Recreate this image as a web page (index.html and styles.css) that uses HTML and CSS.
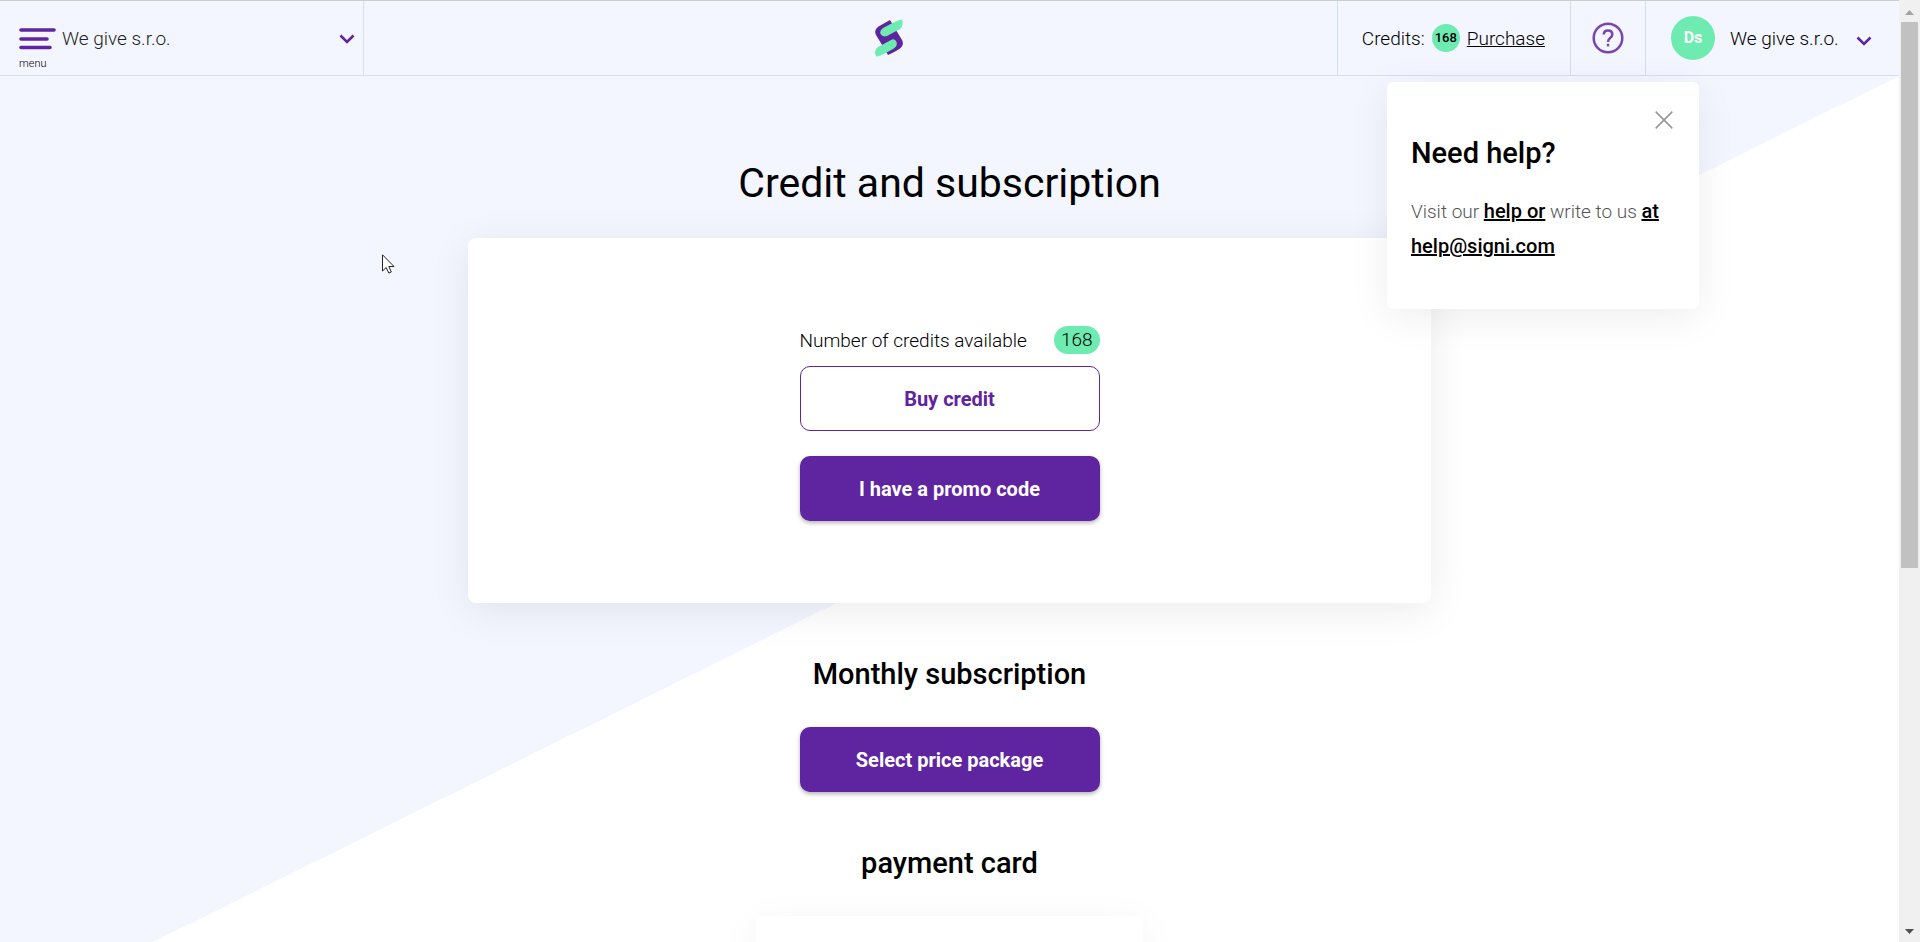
FILE: index.html
```html
<!DOCTYPE html>
<html lang="en">
<head>
  <meta charset="UTF-8" />
  <meta name="viewport" content="width=device-width, initial-scale=1.0"/>
  <title>Credit and subscription</title>
  <link rel="stylesheet" href="styles.css">
</head>
<body>

<div class="page">
  <header class="header">
    <div class="workspace">
      <button class="menu-button" type="button">
        <svg width="37" height="22" viewBox="0 0 37 22" fill="none" stroke="#5f249f" stroke-width="3.6" stroke-linecap="round">
          <path d="M2 2H35M2 11H28M2 19.5H31"/>
        </svg>
        menu
      </button>
      <div class="workspace-picker">
        <select class="workspace-select" aria-label="Workspace">
          <option>We give s.r.o.</option>
        </select>
        <svg class="chevron" width="16" height="10" viewBox="0 0 16 10" fill="none" stroke="#5f249f" stroke-width="2.6">
          <path d="M1.5 1.5L8 8L14.5 1.5"/>
        </svg>
      </div>
    </div>

    <a class="logo" href="#" aria-label="Signi">
      <svg width="30" height="38" viewBox="0 0 30 38">
        <path fill="#5f249f" d="M16 1L4.5 7.5Q-.5 11 2 16L7.5 25L14 36Q25 31 27.5 28Q30 25 28 21L22 11Z"/>
        <path fill="#6eebb0" d="M28 .5Q24.5 .5 10 8.5Q5 11.5 6.5 15Q8.5 18.5 13 17L26 10Q30 6 28 .5Z"/>
        <path fill="#6eebb0" d="M18 20.5L4 28Q-1.5 32 2.5 37.5Q5 38 19 30Q24 27 22.5 23Q21 19.5 18 20.5Z"/>
      </svg>
    </a>

    <div class="credits">
      <span>Credits:</span>
      <span class="credits-badge">168</span>
      <a href="#">Purchase</a>
    </div>

    <div class="help">
      <button class="help-button" type="button" aria-label="Help">
        <svg width="32" height="32" viewBox="0 0 32 32" fill="none" stroke="#7a45b0" stroke-width="2.5">
          <circle cx="16" cy="16" r="14.3"/>
          <path d="M11.8 12.5Q11.8 8.5 16 8.5Q20.3 8.5 20.3 12.4Q20.3 14.5 18.2 16Q16 17.6 16 20"/>
          <path d="M16 21.8V24.4"/>
        </svg>
      </button>
      <div class="help-popup">
        <button class="close-button" type="button" aria-label="Close">
          <svg width="18" height="18" viewBox="0 0 18 18" stroke="#999" stroke-width="1.7">
            <path d="M.7 .7L17.3 17.3M17.3 .7L.7 17.3"/>
          </svg>
        </button>
        <h2>Need help?</h2>
        <p>Visit our <a href="#">help or</a> write to us <a href="#">at help@signi.com</a></p>
      </div>
    </div>

    <button class="account" type="button">
      <span class="avatar">Ds</span>
      <span class="account-name">We give s.r.o.</span>
      <svg class="account-chevron" width="16" height="10" viewBox="0 0 16 10" fill="none" stroke="#5f249f" stroke-width="2.6">
        <path d="M1.5 1.5L8 8L14.5 1.5"/>
      </svg>
    </button>
  </header>

  <main class="content">
    <h1>Credit and subscription</h1>

    <section class="credit-card">
      <div class="credit-box">
        <div class="credit-row">
          <span>Number of credits available</span>
          <span class="credit-count">168</span>
        </div>
        <button class="btn btn-outline" type="button">Buy credit</button>
        <button class="btn btn-primary" type="button">I have a promo code</button>
      </div>
    </section>

    <h2>Monthly subscription</h2>
    <button class="btn btn-primary" type="button">Select price package</button>

    <h2 class="payment-title">payment card</h2>
    <section class="payment-card"></section>
  </main>
</div>

<div class="scrollbar">
  <svg width="21" height="22" viewBox="0 0 21 22" fill="#a3a3a3"><path d="M6 15L10.5 10L15 15Z"/></svg>
  <div class="scrollbar-thumb"></div>
  <svg class="scrollbar-down" width="21" height="22" viewBox="0 0 21 22" fill="#505050"><path d="M6 9L10.5 14L15 9Z"/></svg>
</div>

<svg class="cursor" width="13" height="20" viewBox="0 0 13 20">
  <path fill="#fff" stroke="#222" d="M.5 .8V17L4.2 13.5L6.8 19L9.3 18L6.8 12.5H12Z"/>
</svg>

</body>
</html>
```

FILE: styles.css
```css
* {
  box-sizing: border-box;
}

body {
  margin: 0;
  display: flex;
  height: 100vh;
  overflow: hidden;
  font-family: Roboto, sans-serif;
  font-size: 19px;
  font-weight: 300;
  color: #000;
  background: #fff;
}

button,
select {
  font: inherit;
  color: inherit;
  border: none;
  background: none;
  padding: 0;
  cursor: pointer;
}

a {
  color: inherit;
}

h1,
h2,
p {
  margin: 0;
}

.page {
  flex: 1;
  overflow: hidden;
}

/* header */
.header {
  display: flex;
  height: 76px;
  background: #f3f6fe;
  border-top: 1px solid #ccc;
  border-bottom: 1px solid #d3dfee;
}

.workspace {
  display: flex;
  width: 364px;
  padding-left: 19px;
  border-right: 1px solid #d3dfee;
}

.menu-button {
  display: flex;
  flex-direction: column;
  align-items: flex-start;
  gap: 7px;
  padding-top: 27px;
  font-size: 11px;
  line-height: 14px;
}

.workspace-picker {
  display: flex;
  flex: 1;
  align-items: center;
  position: relative;
  padding-left: 6px;
}

.workspace-select {
  width: 100%;
  height: 74px;
  appearance: none;
  color: #222;
}

.chevron {
  position: absolute;
  top: 33px;
  right: 8px;
  pointer-events: none;
}

.logo {
  display: flex;
  flex: 1;
  align-items: center;
  padding-left: 510px;
}

.credits {
  display: flex;
  align-items: center;
  gap: 7px;
  padding: 0 25px 0 24px;
  border-left: 1px solid #d3dfee;
}

.credits-badge {
  width: 28px;
  height: 28px;
  border-radius: 50%;
  background: #6eebb0;
  font-size: 13px;
  font-weight: 500;
  line-height: 28px;
  text-align: center;
}

.help {
  position: relative;
  width: 75px;
  border-left: 1px solid #d3dfee;
}

.help-button {
  display: flex;
  width: 100%;
  height: 100%;
  align-items: center;
  justify-content: center;
}

.help-popup {
  position: absolute;
  z-index: 2;
  top: 81px;
  right: -54px;
  width: 312px;
  padding: 29px 26px 45px 24px;
  border-radius: 6px;
  background: #fff;
  box-shadow: 0 8px 40px rgba(0, 0, 0, 0.07);
}

.close-button {
  display: block;
  width: 18px;
  height: 18px;
  margin-left: auto;
}

.help-popup h2 {
  margin: 7px 0 24px;
}

.help-popup p {
  color: #555;
  line-height: 34px;
}

.help-popup a {
  color: #000;
  font-size: 20px;
  font-weight: 500;
}

.account {
  display: flex;
  align-items: center;
  width: 254px;
  padding-left: 25px;
  border-left: 1px solid #d3dfee;
}

.avatar {
  width: 44px;
  height: 44px;
  border-radius: 50%;
  background: #6eebb0;
  color: #fff;
  font-size: 16px;
  font-weight: 700;
  line-height: 44px;
}

.account-name {
  margin: 0 17px 0 15px;
}

.account-chevron {
  margin-top: 5px;
}

/* content */
.content {
  display: flex;
  flex-direction: column;
  align-items: center;
  padding-top: 83px;
  background: linear-gradient(to bottom right, #f3f6fe 50%, #fff 50%) no-repeat;
  background-size: 100% 100vh;
}

h1 {
  margin-bottom: 31px;
  font-size: 41px;
  font-weight: 400;
  line-height: 48px;
}

h2 {
  font-size: 29px;
  font-weight: 500;
  line-height: 34px;
}

.credit-card {
  width: 100%;
  max-width: 963px;
  margin-bottom: 54px;
  padding: 88px 0 82px;
  border-radius: 8px;
  background: #fff;
  box-shadow: 0 8px 40px rgba(0, 0, 0, 0.08);
}

.credit-box {
  width: 300px;
  margin: 0 auto;
}

.credit-row {
  display: flex;
  align-items: center;
  justify-content: space-between;
  margin-bottom: 12px;
}

.credit-count {
  padding: 0 7px;
  border-radius: 14px;
  background: #6eebb0;
  line-height: 28px;
}

.btn {
  display: block;
  width: 300px;
  height: 65px;
  border-radius: 10px;
  font-size: 20px;
  font-weight: 700;
}

.btn-outline {
  margin-bottom: 25px;
  border: 1px solid #5f249f;
  background: #fff;
  color: #5f249f;
}

.btn-primary {
  background: #5f249f;
  color: #fff;
  box-shadow: 0 2px 4px rgba(0, 0, 0, 0.3);
}

.content > .btn {
  margin-top: 36px;
}

.payment-title {
  margin: 54px 0 36px;
}

.payment-card {
  width: 387px;
  height: 240px;
  border-radius: 8px;
  background: #fff;
  box-shadow: 0 8px 40px rgba(0, 0, 0, 0.05);
}

/* scrollbar */
.scrollbar {
  display: flex;
  flex-direction: column;
  width: 21px;
  background: #f0f0f0;
}

.scrollbar-thumb {
  height: 58%;
  margin: 0 2px;
  background: #c1c1c1;
}

.scrollbar-down {
  margin-top: auto;
}

.cursor {
  position: absolute;
  z-index: 3;
  top: 254px;
  left: 382px;
}
```
